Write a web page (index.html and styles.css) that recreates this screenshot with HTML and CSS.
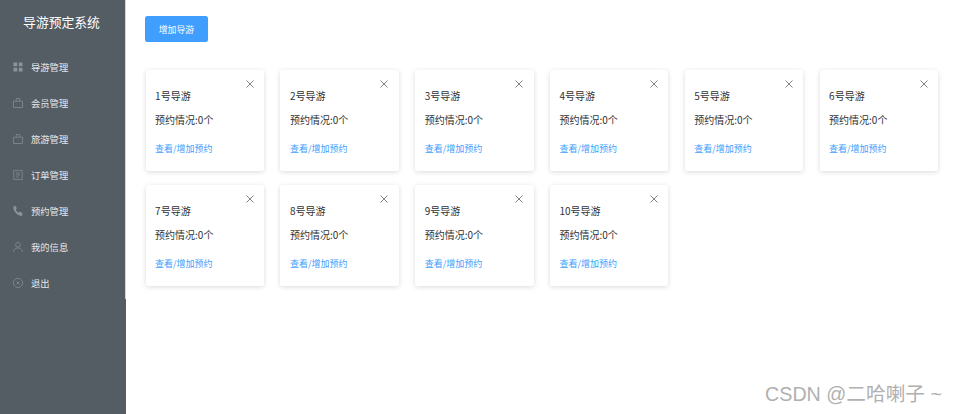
FILE: index.html
```html
<!DOCTYPE html>
<html lang="zh">
<head>
<meta charset="utf-8">
<title>导游预定系统</title>
<link rel="stylesheet" href="styles.css">
</head>
<body>
<div class="app">
  <aside class="sidebar">
    <div class="sidebar-inner">
    <h1 class="brand">导游预定系统</h1>
    <nav class="menu">
      <a class="menu-item"><svg class="ico" viewBox="0 0 10 10"><path fill="#8c9298" d="M.5.500h3.700v3.700H.5zM5.800.500h3.700v3.700H5.800zM.5 5.800h3.700v3.700H.5zM5.800 5.800h3.700v3.700H5.800z"/></svg><span>导游管理</span></a>
      <a class="menu-item"><svg class="ico" viewBox="0 0 10 10"><path fill="none" stroke="#858b92" stroke-width=".8" d="M.5 3.200h9v6.300h-9zM3.200 3.200V.6h3.600v2.600"/></svg><span>会员管理</span></a>
      <a class="menu-item"><svg class="ico" viewBox="0 0 10 10"><path fill="none" stroke="#858b92" stroke-width=".8" d="M.5 3.200h9v6.300h-9zM3.200 3.200V.6h3.600v2.600"/></svg><span>旅游管理</span></a>
      <a class="menu-item"><svg class="ico" viewBox="0 0 10 10"><path fill="none" stroke="#858b92" stroke-width=".8" d="M.8.400h8.400v9.200H.8zM3 3h4M3 5h4M3 7h2.500"/></svg><span>订单管理</span></a>
      <a class="menu-item"><svg class="ico" viewBox="0 0 10 10"><path fill="#8c9298" d="M1 .3 2.800 0l1 2.600-1 1c.5 1.300 1.400 2.300 2.800 2.900l1-1L9.500 7l-.2 2.200c-.1.5-.6.8-1.200.7C4 9.200 .8 6 .3 1.500 .2.900.5.400 1 .3z"/></svg><span>预约管理</span></a>
      <a class="menu-item"><svg class="ico" viewBox="0 0 10 10"><circle cx="5" cy="2.800" r="2.400" fill="none" stroke="#858b92" stroke-width=".8"/><path fill="none" stroke="#858b92" stroke-width=".8" d="M.5 9.800C.8 7.300 2.700 6 5 6s4.200 1.300 4.500 3.800"/></svg><span>我的信息</span></a>
      <a class="menu-item"><svg class="ico" viewBox="0 0 10 10"><circle cx="5" cy="5" r="4.600" fill="none" stroke="#858b92" stroke-width=".8"/><path fill="none" stroke="#858b92" stroke-width=".8" d="m3.500 3.500 3 3M6.500 3.500l-3 3"/></svg><span>退出</span></a>
    </nav>
    </div>
  </aside>
  <main class="content">
    <button class="add-btn">增加导游</button>
    <section class="cards">
      <article class="card"><button class="close" aria-label="关闭"><svg viewBox="0 0 8 8"><path d="m.5.500 7 7M7.500.500l-7 7"/></svg></button><p class="name">1号导游</p><p class="status">预约情况:0个</p><a class="link">查看/增加预约</a></article>
      <article class="card"><button class="close" aria-label="关闭"><svg viewBox="0 0 8 8"><path d="m.5.500 7 7M7.500.500l-7 7"/></svg></button><p class="name">2号导游</p><p class="status">预约情况:0个</p><a class="link">查看/增加预约</a></article>
      <article class="card"><button class="close" aria-label="关闭"><svg viewBox="0 0 8 8"><path d="m.5.500 7 7M7.500.500l-7 7"/></svg></button><p class="name">3号导游</p><p class="status">预约情况:0个</p><a class="link">查看/增加预约</a></article>
      <article class="card"><button class="close" aria-label="关闭"><svg viewBox="0 0 8 8"><path d="m.5.500 7 7M7.500.500l-7 7"/></svg></button><p class="name">4号导游</p><p class="status">预约情况:0个</p><a class="link">查看/增加预约</a></article>
      <article class="card"><button class="close" aria-label="关闭"><svg viewBox="0 0 8 8"><path d="m.5.500 7 7M7.500.500l-7 7"/></svg></button><p class="name">5号导游</p><p class="status">预约情况:0个</p><a class="link">查看/增加预约</a></article>
      <article class="card"><button class="close" aria-label="关闭"><svg viewBox="0 0 8 8"><path d="m.5.500 7 7M7.500.500l-7 7"/></svg></button><p class="name">6号导游</p><p class="status">预约情况:0个</p><a class="link">查看/增加预约</a></article>
      <article class="card"><button class="close" aria-label="关闭"><svg viewBox="0 0 8 8"><path d="m.5.500 7 7M7.500.500l-7 7"/></svg></button><p class="name">7号导游</p><p class="status">预约情况:0个</p><a class="link">查看/增加预约</a></article>
      <article class="card"><button class="close" aria-label="关闭"><svg viewBox="0 0 8 8"><path d="m.5.500 7 7M7.500.500l-7 7"/></svg></button><p class="name">8号导游</p><p class="status">预约情况:0个</p><a class="link">查看/增加预约</a></article>
      <article class="card"><button class="close" aria-label="关闭"><svg viewBox="0 0 8 8"><path d="m.5.500 7 7M7.500.500l-7 7"/></svg></button><p class="name">9号导游</p><p class="status">预约情况:0个</p><a class="link">查看/增加预约</a></article>
      <article class="card"><button class="close" aria-label="关闭"><svg viewBox="0 0 8 8"><path d="m.5.500 7 7M7.500.500l-7 7"/></svg></button><p class="name">10号导游</p><p class="status">预约情况:0个</p><a class="link">查看/增加预约</a></article>
    </section>
  </main>
</div>
<div class="watermark">CSDN @二哈喇子 ~</div>
</body>
</html>
```
FILE: styles.css
```css
* { box-sizing: border-box; }
html, body { margin: 0; height: 100%; overflow: hidden; }
body {
  position: relative;
  font-family: "Noto Sans CJK SC", "Liberation Sans", sans-serif;
  background: #fff;
  color: #303133;
}
.app { display: flex; height: 414px; }
.sidebar { flex: 0 0 126px; background: #545c64; color: #fff; }
.sidebar-inner { height: 299px; border-right: 1px solid #d4d6d9; }
.brand {
  margin: 0;
  padding: 12px 2px 0 0;
  height: 48px;
  font-size: 12.800px;
  line-height: 19px;
  font-weight: 400;
  text-align: center;
}
.menu { display: flex; flex-direction: column; }
.menu-item {
  display: flex;
  align-items: center;
  height: 36px;
  padding: 1px 0 0 13px;
  gap: 8px;
  color: #e6e8ea;
  font-size: 9.300px;
}
.ico { width: 10px; height: 10px; flex: none; }
.content { flex: 1; padding: 16px 0 0 19px; }
.add-btn {
  display: block;
  width: 63px;
  height: 26px;
  padding: 0;
  border: 0;
  border-radius: 2.500px;
  background: #409eff;
  color: #fff;
  font: inherit;
  font-size: 8.900px;
}
.cards {
  display: grid;
  grid-template-columns: repeat(6, 118.500px);
  grid-auto-rows: 101px;
  column-gap: 16.300px;
  row-gap: 14px;
  margin: 28px 0 0 .6px;
}
.card {
  position: relative;
  padding: 19px 9.500px 0;
  background: #fff;
  border-radius: 2.500px;
  box-shadow: 0 1px 5px rgba(0, 0, 0, .15);
  font-size: 10px;
}
.name, .status { margin: 0; line-height: 14px; color: #303133; }
.status { margin-top: 9.500px; }
.link { display: block; margin-top: 15px; font-size: 9px; line-height: 14px; color: #409eff; }
.close {
  position: absolute;
  top: 10px;
  right: 10.500px;
  width: 8px;
  height: 8px;
  padding: 0;
  border: 0;
  background: none;
}
.close svg { display: block; width: 8px; height: 8px; }
.close path { fill: none; stroke: #606266; stroke-width: .8; }
.watermark {
  position: absolute;
  right: 14px;
  top: 381px;
  font-size: 19.700px;
  line-height: 27px;
  color: #b0b0b0;
  font-family: "Liberation Sans", "Noto Sans CJK SC", sans-serif;
}
```
